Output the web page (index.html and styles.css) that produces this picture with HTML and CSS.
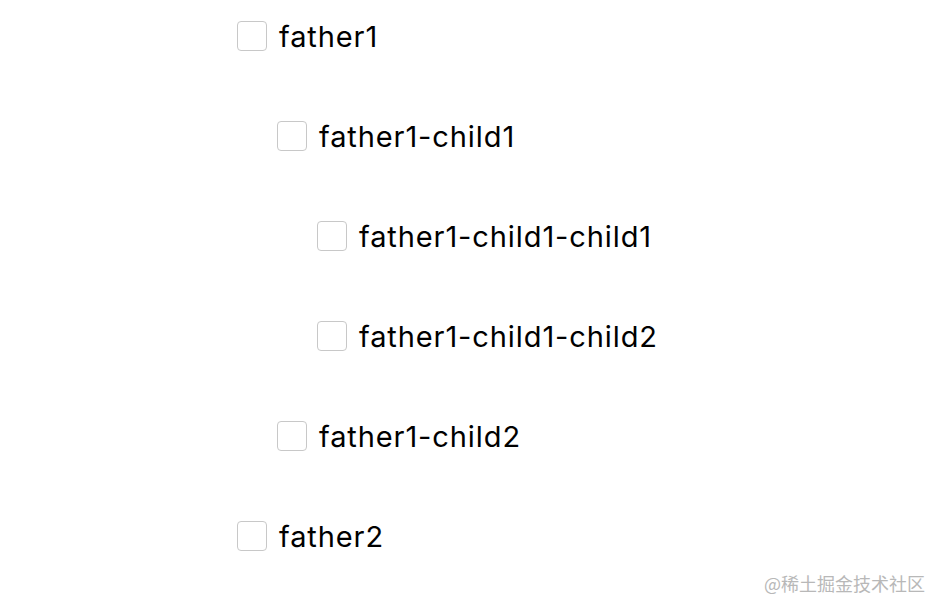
FILE: index.html
```html
<!DOCTYPE html>
<html>
<head>
<meta charset="utf-8">
<link rel="stylesheet" href="styles.css">
</head>
<body>
<div class="tree">
  <label class="node lvl0"><span class="box"></span><span class="label">father1</span></label>
  <label class="node lvl1"><span class="box"></span><span class="label">father1-child1</span></label>
  <label class="node lvl2"><span class="box"></span><span class="label">father1-child1-child1</span></label>
  <label class="node lvl2"><span class="box"></span><span class="label">father1-child1-child2</span></label>
  <label class="node lvl1"><span class="box"></span><span class="label">father1-child2</span></label>
  <label class="node lvl0"><span class="box"></span><span class="label">father2</span></label>
</div>
<div class="watermark">@稀土掘金技术社区</div>
</body>
</html>
```
FILE: styles.css
```css
html, body {
  margin: 0;
  padding: 0;
  background: #fff;
  width: 928px;
  height: 602px;
  overflow: hidden;
  position: relative;
  font-family: Inter, "Noto Sans", sans-serif;
}
.tree {
  display: flex;
  flex-direction: column;
  gap: 70px;
  padding: 21px 0 0 237px;
}
.node {
  display: flex;
  align-items: center;
  height: 30px;
  gap: 12px;
}
.lvl1 { margin-left: 40px; }
.lvl2 { margin-left: 80px; }
.box {
  width: 28px;
  height: 28px;
  border: 1px solid #c8c8c8;
  border-radius: 4px;
  background: #fff;
  flex: none;
}
.label {
  font-size: 29px;
  color: #000;
  line-height: 30px;
  letter-spacing: 0.9px;
  position: relative;
  top: 1px;
}
.watermark {
  position: absolute;
  right: 3px;
  bottom: 9px;
  font-size: 18px;
  color: #b8b8b8;
  font-family: "Noto Sans CJK SC", sans-serif;
  line-height: 20px;
}
```
